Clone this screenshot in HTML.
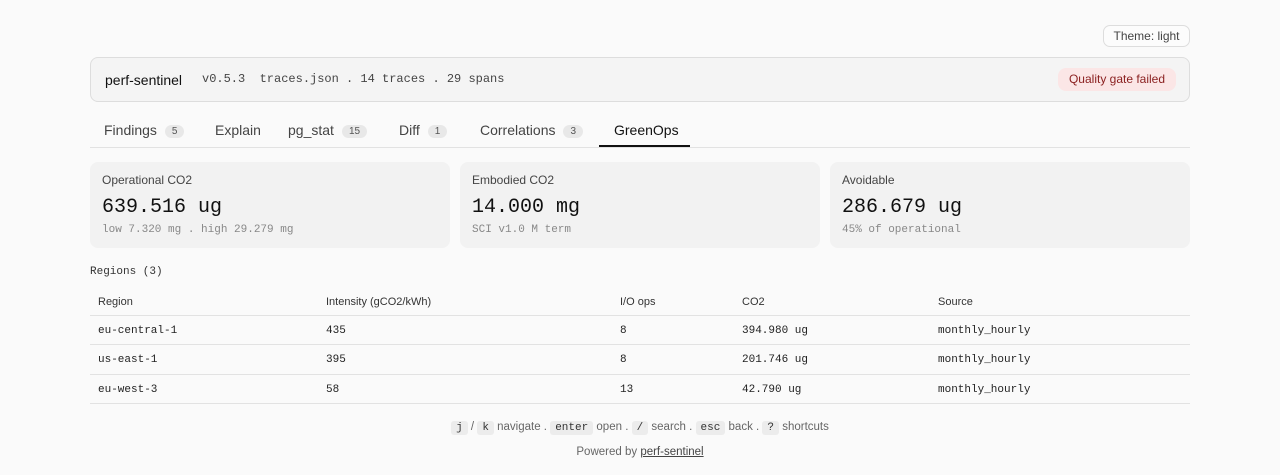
<!DOCTYPE html>
<html><head><style>
*{box-sizing:border-box;margin:0;padding:0}
body{width:1280px;height:475px;background:#fafafa;font-family:"Liberation Sans",sans-serif;color:#222;position:relative;overflow:hidden}
.mono{font-family:"Liberation Mono","DejaVu Sans Mono",monospace}
.abs{position:absolute}
.theme{left:1103px;top:25px;width:87px;height:22px;border:1px solid #ddd;border-radius:7px;font-size:12px;color:#444;text-align:center;line-height:20px;background:#fcfcfc}
.hdr{left:90px;top:57px;width:1100px;height:45px;border:1px solid #ddd;border-radius:8px;background:#f4f4f4}
.tabs{left:90px;top:118px;width:1100px;height:30px;border-bottom:1px solid #e2e2e2}
.tab{position:absolute;top:4px;font-size:14px;color:#444}
.badge{display:inline-block;background:#e8e8e8;border-radius:8px;font-size:10px;padding:1px 7px;margin-left:8px;color:#555;vertical-align:1px}
.card{top:162px;width:360px;height:86px;background:#f2f2f2;border-radius:8px}
.card .l{position:absolute;left:12px;top:11px;font-size:12px;color:#444}
.card .v{position:absolute;left:12px;top:34px;font-size:20px;color:#111}
.card .s{position:absolute;left:12px;top:62px;font-size:11px;color:#888}
.line{left:90px;width:1100px;height:1px;background:#e2e2e2}
.cell{position:absolute;font-size:12px;color:#222}
.cell.mono{font-size:11px;margin-top:2px}
.th{font-size:11px;color:#333;margin-top:1px}
kbd{font-family:"Liberation Mono",monospace;background:#ececec;border-radius:3px;padding:1px 5px;font-size:11px;color:#333}
</style></head><body>
<div class="abs theme">Theme: light</div>
<div class="abs hdr">
 <span class="abs" style="left:14px;top:14px;font-size:14px;color:#111">perf-sentinel</span>
 <span class="abs mono" style="left:111px;top:14px;font-size:12px;color:#444">v0.5.3&nbsp; traces.json . 14 traces . 29 spans</span>
 <span class="abs" style="left:967px;top:10px;height:23px;width:118px;background:#fbe6e6;border-radius:8px;color:#8a1f1f;font-size:12px;text-align:center;line-height:23px">Quality gate failed</span>
</div>
<div class="abs tabs">
 <span class="tab" style="left:14px">Findings<span class="badge">5</span></span>
 <span class="tab" style="left:125px">Explain</span>
 <span class="tab" style="left:198px">pg_stat<span class="badge">15</span></span>
 <span class="tab" style="left:309px">Diff<span class="badge">1</span></span>
 <span class="tab" style="left:390px">Correlations<span class="badge">3</span></span>
 <span class="tab" style="left:524px;color:#111">GreenOps</span>
 <div class="abs" style="left:509px;top:27px;width:91px;height:2px;background:#111"></div>
</div>
<div class="abs card" style="left:90px"><div class="l">Operational CO2</div><div class="v mono">639.516 ug</div><div class="s mono">low 7.320 mg . high 29.279 mg</div></div>
<div class="abs card" style="left:460px"><div class="l">Embodied CO2</div><div class="v mono">14.000 mg</div><div class="s mono">SCI v1.0 M term</div></div>
<div class="abs card" style="left:830px"><div class="l">Avoidable</div><div class="v mono">286.679 ug</div><div class="s mono">45% of operational</div></div>
<div class="abs mono" style="left:90px;top:266px;font-size:11px;color:#333">Regions (3)</div>
<div class="cell th" style="left:98px;top:295px">Region</div>
<div class="cell th" style="left:326px;top:295px">Intensity (gCO2/kWh)</div>
<div class="cell th" style="left:620px;top:295px">I/O ops</div>
<div class="cell th" style="left:742px;top:295px">CO2</div>
<div class="cell th" style="left:938px;top:295px">Source</div>
<div class="abs line" style="top:315px"></div>
<div class="cell mono" style="left:98px;top:323px">eu-central-1</div><div class="cell mono" style="left:326px;top:323px">435</div><div class="cell mono" style="left:620px;top:323px">8</div><div class="cell mono" style="left:742px;top:323px">394.980 ug</div><div class="cell mono" style="left:938px;top:323px">monthly_hourly</div>
<div class="abs line" style="top:344px"></div>
<div class="cell mono" style="left:98px;top:352px">us-east-1</div><div class="cell mono" style="left:326px;top:352px">395</div><div class="cell mono" style="left:620px;top:352px">8</div><div class="cell mono" style="left:742px;top:352px">201.746 ug</div><div class="cell mono" style="left:938px;top:352px">monthly_hourly</div>
<div class="abs line" style="top:374px"></div>
<div class="cell mono" style="left:98px;top:382px">eu-west-3</div><div class="cell mono" style="left:326px;top:382px">58</div><div class="cell mono" style="left:620px;top:382px">13</div><div class="cell mono" style="left:742px;top:382px">42.790 ug</div><div class="cell mono" style="left:938px;top:382px">monthly_hourly</div>
<div class="abs line" style="top:403px"></div>
<div class="abs" style="left:0;width:1280px;top:421px;text-align:center;font-size:11.5px;color:#666"><kbd>j</kbd> / <kbd>k</kbd> navigate . <kbd>enter</kbd> open . <kbd>/</kbd> search . <kbd>esc</kbd> back . <kbd>?</kbd> shortcuts</div>
<div class="abs" style="left:0;width:1280px;top:446px;text-align:center;font-size:11.5px;color:#666">Powered by <span style="text-decoration:underline;color:#444">perf-sentinel</span></div>
</body></html>
